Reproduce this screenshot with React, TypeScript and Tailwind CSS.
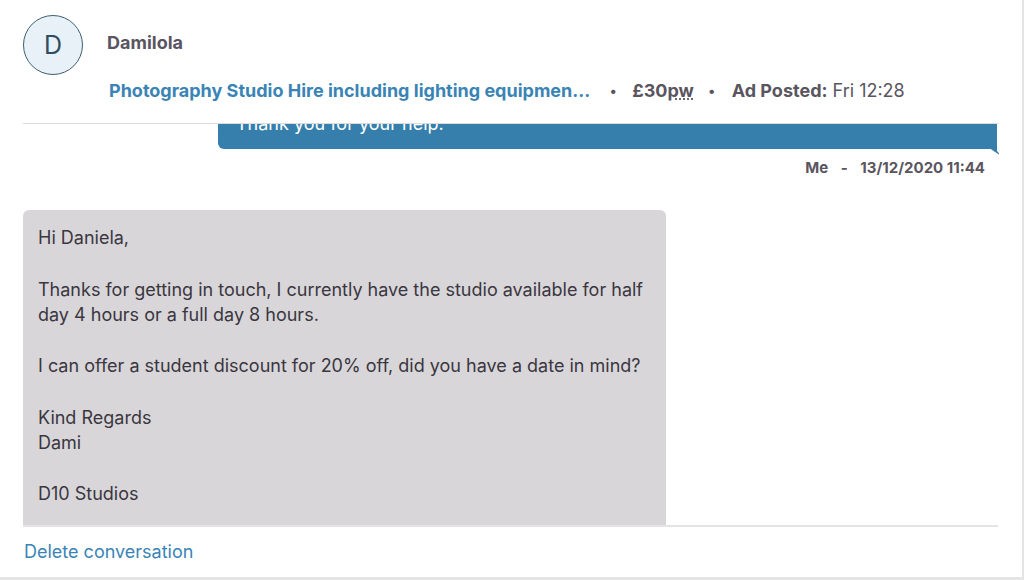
import React from 'react';

const font = { fontFamily: 'Inter, "Noto Sans", sans-serif' };

function Avatar({ letter }: { letter: string }) {
  return (
    <div className="w-[60px] h-[60px] shrink-0 rounded-full bg-[#e8f1f8] border border-[#3d5f70] flex items-center justify-center">
      <span className="text-[25px] text-[#2f4d5e] leading-none">{letter}</span>
    </div>
  );
}

const reply = [
  ['Hi Daniela,'],
  ['Thanks for getting in touch, I currently have the studio available for half', 'day 4 hours or a full day 8 hours.'],
  ['I can offer a student discount for 20% off, did you have a date in mind?'],
  ['Kind Regards', 'Dami'],
  ['D10 Studios'],
];

export default function App() {
  return (
    <div
      style={font}
      className="w-[1024px] h-[580px] bg-white border-r-2 border-b-[3px] border-[#e4e4e4] flex flex-col overflow-hidden"
    >
      {/* Conversation header */}
      <header className="mx-[23px] pt-[15px] border-b border-[#dcdcdc] flex gap-[24px] h-[124px] shrink-0">
        <Avatar letter="D" />
        <div className="flex flex-col pt-[16px]">
          <h3 className="text-[18px] font-bold text-[#5a5560] leading-[24px]">Damilola</h3>
          <div className="mt-[24px] flex items-center text-[18px] leading-[24px] ml-[2px] whitespace-nowrap">
            <a className="font-bold text-[#3a84b5]">Photography Studio Hire including lighting equipmen...</a>
            <span className="ml-[19px] mr-[15px] text-[#5a5560] text-[14px] leading-[24px]">•</span>
            <span className="font-bold text-[#5a5560]">
              £30<abbr className="underline decoration-dotted underline-offset-2">pw</abbr>
            </span>
            <span className="ml-[14px] mr-[16px] text-[#5a5560] text-[14px] leading-[24px]">•</span>
            <span className="text-[#5a5560]">
              <b>Ad Posted:</b> Fri 12:28
            </span>
          </div>
        </div>
      </header>

      {/* Messages, scrolled to the bottom */}
      <div className="flex-1 mx-[23px] overflow-hidden flex flex-col justify-end">
        <div className="flex flex-col">
          <div className="ml-[195px] mr-[2px] relative">
            <div className="bg-[#367fad] text-white text-[18px] leading-[25.6px] rounded-bl-[6px] px-[18px] pt-[12px] pb-[13px]">
              <p>Hi, I'm interested in hiring the studio for a student project.</p>
              <p>Could you let me know availability and rates?</p>
              <p>Thank you for your help.</p>
            </div>
            <svg className="absolute right-[-5px] bottom-[-8px]" width="14" height="10" viewBox="0 0 14 10">
              <path d="M0 0 H9 V-4 L9 4 L13.5 9 Q8 6 0 0 Z" fill="#367fad" />
            </svg>
          </div>
          <div className="mt-[9px] self-end mr-[14px] text-[15px] font-bold text-[#5a5560] leading-[20px]">
            Me <span className="mx-[9px]">-</span> 13/12/2020 11:44
          </div>
          <div className="mt-[32px] w-[643px] bg-[#d8d6d9] rounded-t-[6px] px-[15px] pt-[15px] pb-[18px] text-[18px] leading-[25.6px] text-[#3b3640]">
            {reply.map((para, i) => (
              <p key={i} className={i > 0 ? 'mt-[25.6px]' : ''}>
                {para.map((line, j) => (
                  <React.Fragment key={j}>
                    {line}
                    {j < para.length - 1 && <br />}
                  </React.Fragment>
                ))}
              </p>
            ))}
          </div>
        </div>
      </div>

      {/* Footer */}
      <div className="mx-[23px] mr-[24px] border-t-2 border-[#e4e4e4] h-[52px] shrink-0 flex items-start pt-[13px]">
        <a className="text-[18px] text-[#3a84b5] leading-[24px] ml-[1px]">Delete conversation</a>
      </div>
    </div>
  );
}
